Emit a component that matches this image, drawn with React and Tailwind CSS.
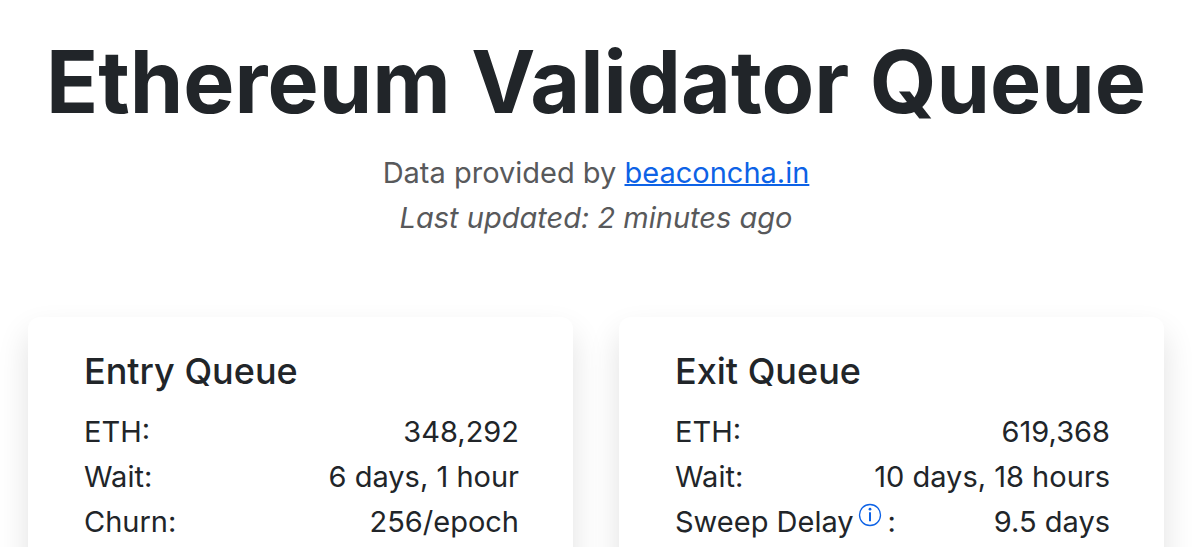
import React from 'react';

const entryRows = [
  { label: 'ETH', value: '348,292' },
  { label: 'Wait', value: '6 days, 1 hour' },
  { label: 'Churn', value: '256/epoch' },
];

const exitRows = [
  { label: 'ETH', value: '619,368' },
  { label: 'Wait', value: '10 days, 18 hours' },
  { label: 'Sweep Delay', value: '9.5 days', info: true },
];

// circled "i" next to a label
const InfoIcon = () => (
  <svg viewBox="0 0 24 24" className="w-6 h-6" fill="none" stroke="#0d62e6">
    <circle cx="12" cy="12" r="10.5" strokeWidth="1.3" />
    <path d="M12 9.2v9" strokeWidth="2" />
    <circle cx="12" cy="6.2" r="1.4" fill="#0d62e6" stroke="none" />
  </svg>
);

const QueueCard = ({ title, rows }) => (
  <section className="flex-1 bg-white rounded-xl shadow-[0_16px_32px_rgba(0,0,0,0.12)] pl-14 pr-[54px] pt-8 pb-12">
    <h2 className="text-[36px] leading-[44px] font-medium mb-4">{title}</h2>
    <dl>
      {rows.map((row) => (
        <div key={row.label} className="flex justify-between text-[29px] leading-[45px]">
          <dt className="flex">
            {row.label}
            {row.info && (
              <button type="button" aria-label="About sweep delay" className="self-start mt-1 ml-1 mr-1.5">
                <InfoIcon />
              </button>
            )}
            :
          </dt>
          <dd>{row.value}</dd>
        </div>
      ))}
    </dl>
  </section>
);

const App = () => {
  return (
    <main className="h-screen overflow-hidden bg-white text-[#212529] font-[Inter,sans-serif] pr-2">
      <header className="text-center pt-6">
        <h1 className="text-[86px] leading-[116px] font-bold">Ethereum Validator Queue</h1>
        <div className="text-[29px] leading-[45px] text-[#58595b] mt-2.5">
          <p>
            Data provided by{' '}
            <a href="https://beaconcha.in" className="text-[#0d62e6] underline decoration-2">
              beaconcha.in
            </a>
          </p>
          <p className="italic">Last updated: 2 minutes ago</p>
        </div>
      </header>
      <div className="flex gap-[46px] px-7 pt-[77px]">
        <QueueCard title="Entry Queue" rows={entryRows} />
        <QueueCard title="Exit Queue" rows={exitRows} />
      </div>
    </main>
  );
};

export default App;
